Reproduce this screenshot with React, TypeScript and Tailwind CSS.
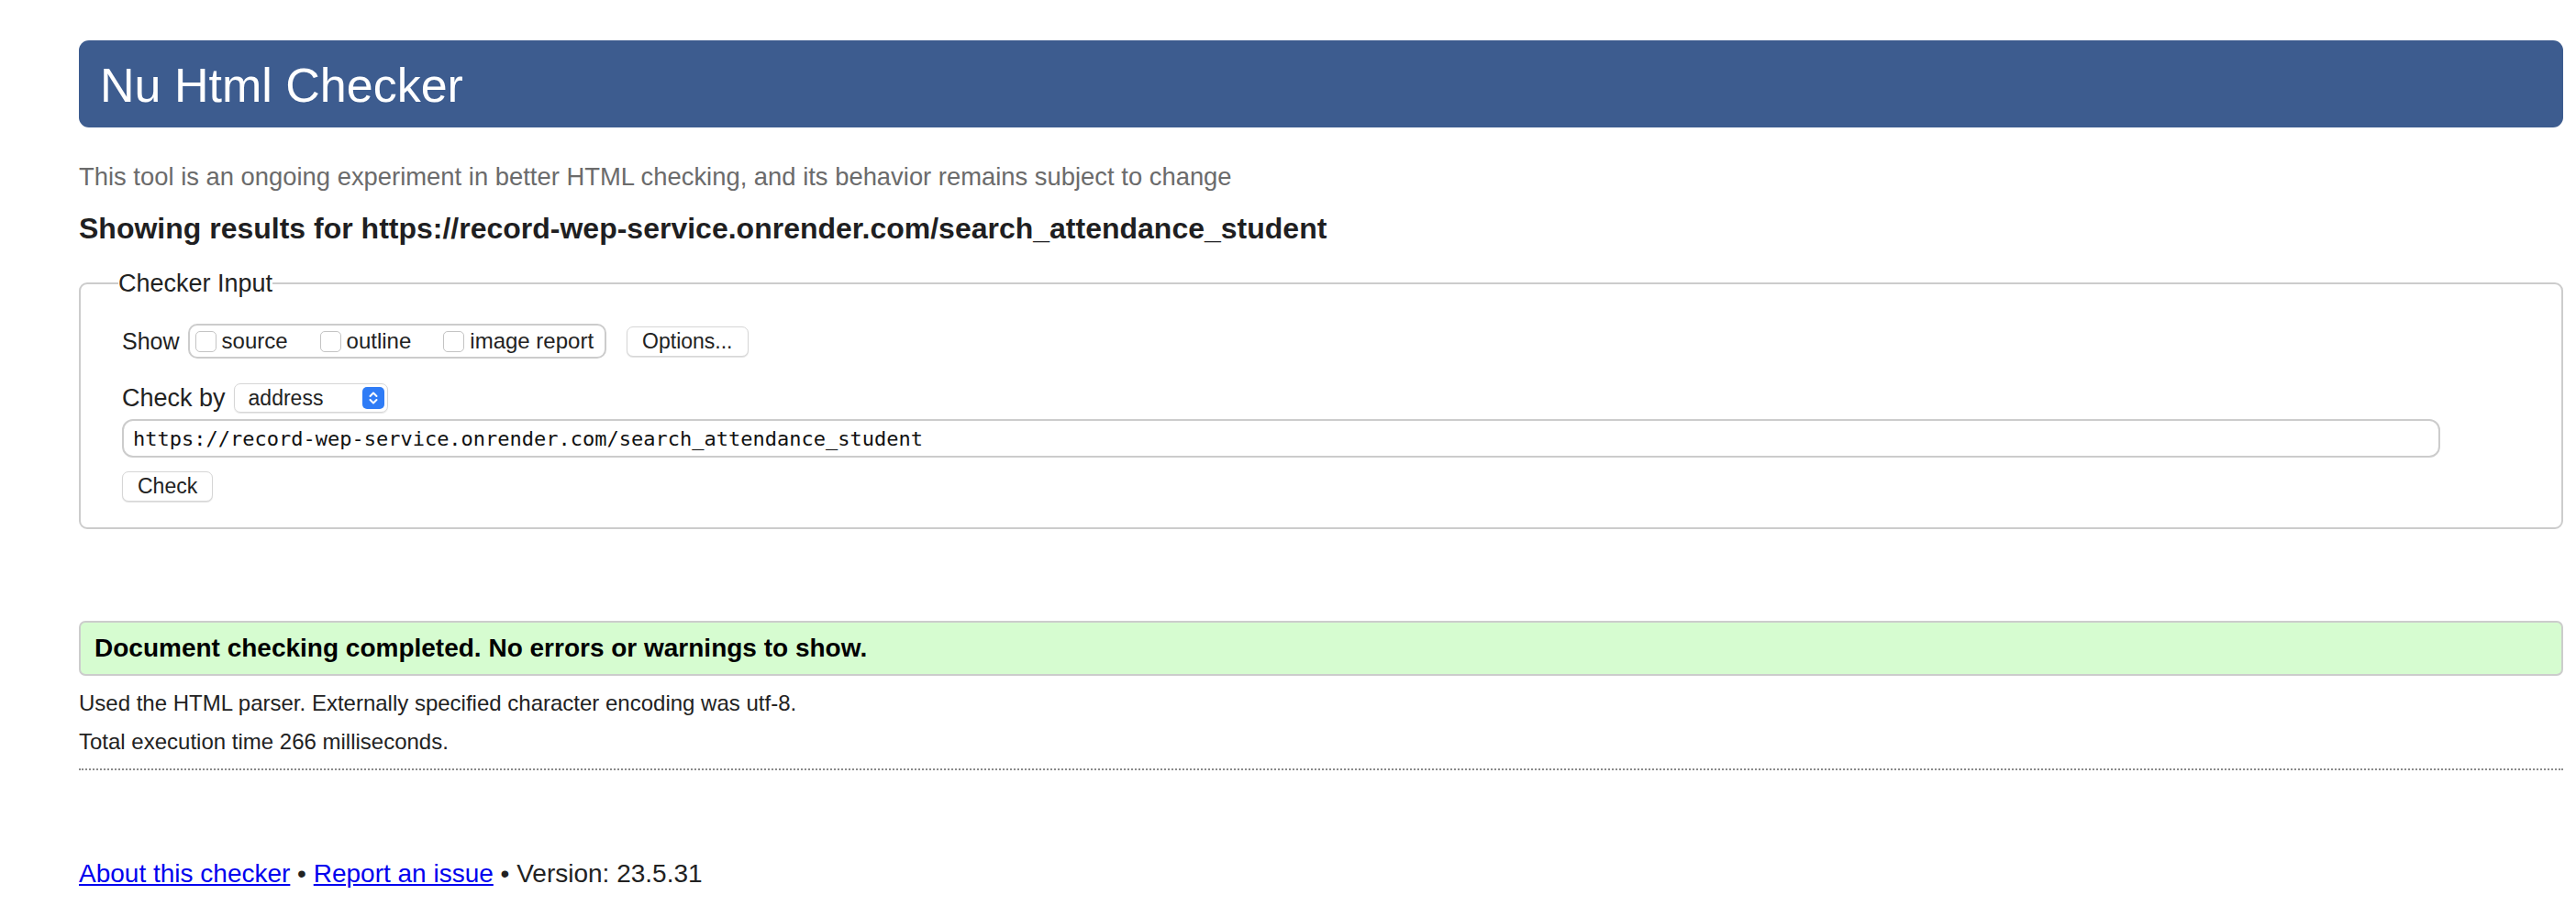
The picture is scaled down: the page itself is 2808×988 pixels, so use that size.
const pageUrl = 'https://record-wep-service.onrender.com/search_attendance_student';

const showOptions = ['source', 'outline', 'image report'];

function Stepper() {
  return (
    <span className="flex h-[24px] w-[24px] items-center justify-center rounded-[5px] bg-[#2f7cf6]">
      <svg width="14" height="18" viewBox="0 0 14 18" fill="none">
        <path d="M3.5 7l3.5-3.5L10.5 7" stroke="white" strokeWidth="2" strokeLinecap="round" strokeLinejoin="round" />
        <path d="M3.5 11l3.5 3.5L10.5 11" stroke="white" strokeWidth="2" strokeLinecap="round" strokeLinejoin="round" />
      </svg>
    </span>
  );
}

export default function App() {
  return (
    <div className="min-h-screen bg-white pl-[86px] pr-[14px] pt-[44px] font-['Liberation_Sans',Arial,sans-serif] text-[#222]">
      <header className="h-[95px] rounded-[11px] bg-[#3d5c8f] pl-[23px] pt-[3px]">
        <h1 className="text-[52px] leading-[92px] text-white">Nu Html Checker</h1>
      </header>

      <p className="mt-[34px] text-[27.4px] leading-[40px] text-[#6b6b6b]">
        This tool is an ongoing experiment in better HTML checking, and its behavior remains subject to change
      </p>
      <h2 className="mt-[16px] text-[32px] font-bold leading-[40px] text-[#1f1f22]">
        Showing results for {pageUrl}
      </h2>

      <fieldset className="mt-[25px] rounded-[9px] border-2 border-[#cccccc] pb-[28px] pl-[45px] pt-[29px]">
        <legend className="-ml-[4px] text-[27px] leading-[30px]">Checker Input</legend>

        <div className="flex h-[38px] items-center">
          <span className="text-[25px] leading-[38px]">Show</span>
          <div className="ml-[9px] flex h-[38px] items-center gap-[35px] rounded-[10px] border-2 border-[#cccccc] pl-[6px] pr-[12px]">
            {showOptions.map((label) => (
              <label key={label} className="flex items-center gap-[6px] text-[24px] leading-none">
                <input
                  type="checkbox"
                  className="h-[23px] w-[23px] appearance-none rounded-[5px] border border-[#c4c4c4] bg-white"
                />
                {label}
              </label>
            ))}
          </div>
          <button className="ml-[22px] h-[33px] rounded-[7px] border border-[#d6d6d6] bg-white px-[16px] text-[23px] leading-none shadow-[0_1px_1px_rgba(0,0,0,0.12)]">
            Options...
          </button>
        </div>

        <div className="mt-[27px] flex h-[32px] items-center">
          <span className="text-[27px] leading-[32px]">Check by</span>
          <div className="ml-[9px] flex h-[32px] w-[168px] items-center justify-between rounded-[7px] border border-[#d6d6d6] pl-[15px] pr-[3px] shadow-[0_1px_1px_rgba(0,0,0,0.1)]">
            <span className="text-[23px] leading-none">address</span>
            <Stepper />
          </div>
        </div>

        <input
          readOnly
          value={pageUrl}
          className="mt-[7px] block h-[42px] w-[2527px] rounded-[12px] border-2 border-[#cccccc] pl-[10px] font-['DejaVu_Sans_Mono',monospace] text-[22px] text-[#111] outline-none"
        />

        <button className="mt-[15px] block h-[33px] rounded-[7px] border border-[#d6d6d6] bg-white px-[16px] text-[23px] leading-none shadow-[0_1px_1px_rgba(0,0,0,0.12)]">
          Check
        </button>
      </fieldset>

      <div className="mt-[100px] flex h-[60px] items-center rounded-[7px] border-2 border-[#cccccc] bg-[#d6fcd0] pl-[15px]">
        <p className="text-[28px] font-bold leading-none text-black">
          Document checking completed. No errors or warnings to show.
        </p>
      </div>

      <p className="mt-[9px] text-[24px] leading-[42px]">
        Used the HTML parser. Externally specified character encoding was utf-8.
      </p>
      <p className="text-[24px] leading-[42px]">Total execution time 266 milliseconds.</p>
      <div className="mt-[8px] border-t-2 border-dotted border-[#8a8a8a]" />

      <p className="mt-[93px] text-[28px] leading-[40px]">
        <a href="#" className="text-[#0000ee] underline">About this checker</a>
        {' • '}
        <a href="#" className="text-[#0000ee] underline">Report an issue</a>
        {' • Version: 23.5.31'}
      </p>
    </div>
  );
}
